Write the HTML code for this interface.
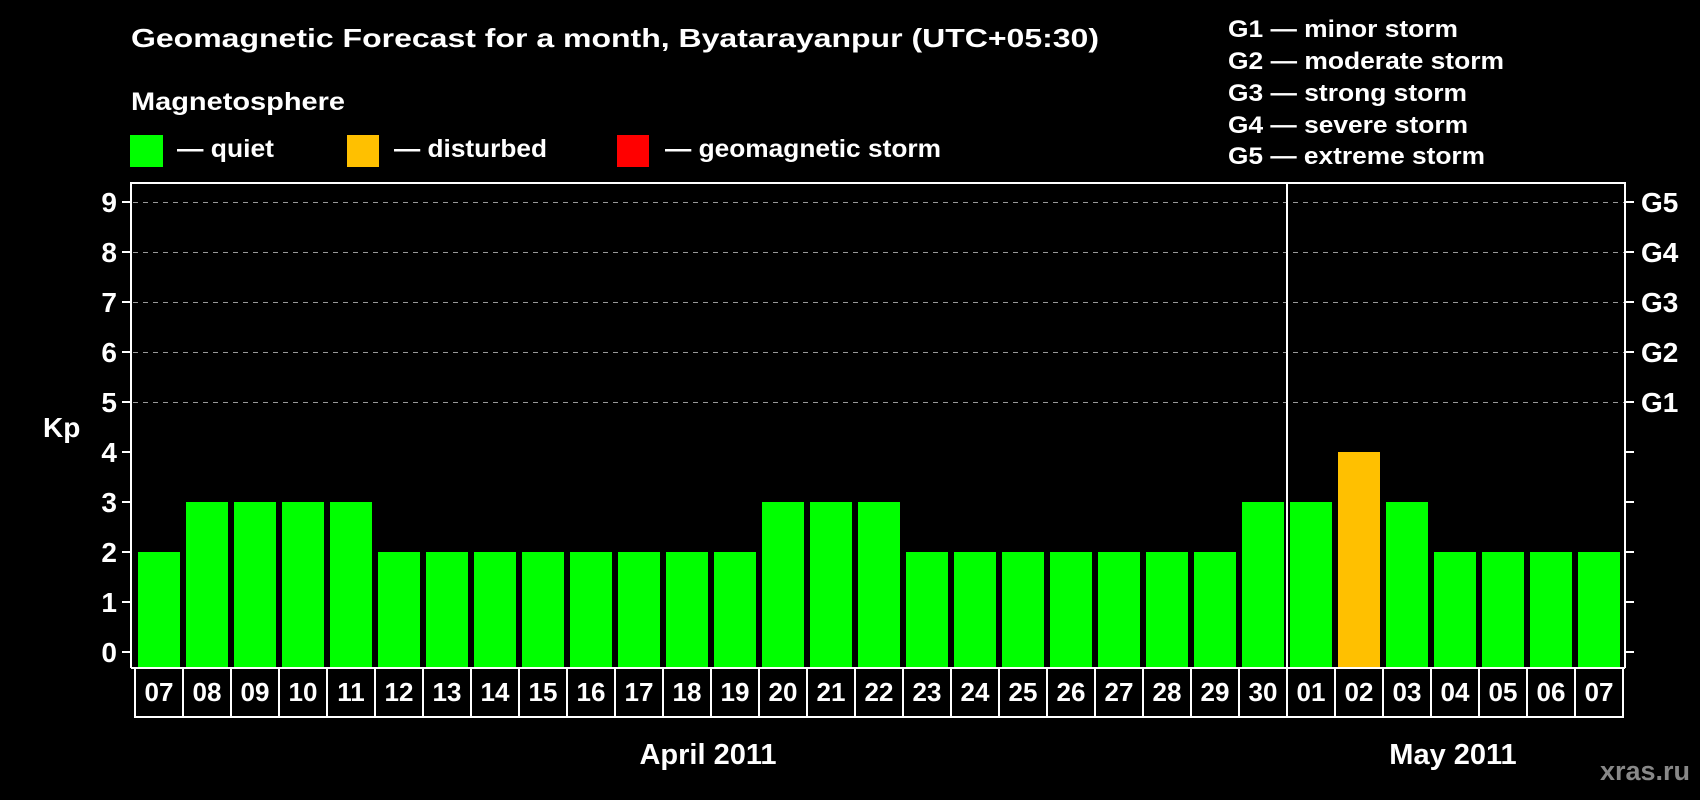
<!DOCTYPE html>
<html><head><meta charset="utf-8"><style>
html,body{margin:0;padding:0;background:#000;}
svg{display:block;font-family:"Liberation Sans",Arial,sans-serif;font-weight:bold;}
</style></head><body>
<svg width="1700" height="800" viewBox="0 0 1700 800" xmlns="http://www.w3.org/2000/svg">
<rect width="1700" height="800" fill="#000"/>
<g fill="#fff">
<text x="131" y="47" font-size="26" textLength="968" lengthAdjust="spacingAndGlyphs">Geomagnetic Forecast for a month, Byatarayanpur (UTC+05:30)</text>
<text x="131" y="110" font-size="25" textLength="214" lengthAdjust="spacingAndGlyphs">Magnetosphere</text>
<text x="177" y="157" font-size="25" textLength="97" lengthAdjust="spacingAndGlyphs">— quiet</text>
<text x="394" y="157" font-size="25" textLength="153" lengthAdjust="spacingAndGlyphs">— disturbed</text>
<text x="665" y="157" font-size="25" textLength="276" lengthAdjust="spacingAndGlyphs">— geomagnetic storm</text>
<g font-size="24">
<text x="1228" y="37" textLength="230" lengthAdjust="spacingAndGlyphs">G1 — minor storm</text>
<text x="1228" y="69" textLength="276" lengthAdjust="spacingAndGlyphs">G2 — moderate storm</text>
<text x="1228" y="101" textLength="239" lengthAdjust="spacingAndGlyphs">G3 — strong storm</text>
<text x="1228" y="133" textLength="240" lengthAdjust="spacingAndGlyphs">G4 — severe storm</text>
<text x="1228" y="164" textLength="257" lengthAdjust="spacingAndGlyphs">G5 — extreme storm</text>
</g>
</g>
<rect x="130" y="135" width="33" height="32" fill="#00ff00"/>
<rect x="347" y="135" width="32" height="32" fill="#ffc000"/>
<rect x="617" y="135" width="32" height="32" fill="#ff0000"/>

<g stroke="#999" stroke-width="1" stroke-dasharray="5,5">
<line x1="133" y1="202.5" x2="1624" y2="202.5"/>
<line x1="133" y1="252.5" x2="1624" y2="252.5"/>
<line x1="133" y1="302.5" x2="1624" y2="302.5"/>
<line x1="133" y1="352.5" x2="1624" y2="352.5"/>
<line x1="133" y1="402.5" x2="1624" y2="402.5"/>
</g>

<g fill="#00ff00">
<rect x="138" y="552" width="42" height="116"/>
<rect x="186" y="502" width="42" height="166"/>
<rect x="234" y="502" width="42" height="166"/>
<rect x="282" y="502" width="42" height="166"/>
<rect x="330" y="502" width="42" height="166"/>
<rect x="378" y="552" width="42" height="116"/>
<rect x="426" y="552" width="42" height="116"/>
<rect x="474" y="552" width="42" height="116"/>
<rect x="522" y="552" width="42" height="116"/>
<rect x="570" y="552" width="42" height="116"/>
<rect x="618" y="552" width="42" height="116"/>
<rect x="666" y="552" width="42" height="116"/>
<rect x="714" y="552" width="42" height="116"/>
<rect x="762" y="502" width="42" height="166"/>
<rect x="810" y="502" width="42" height="166"/>
<rect x="858" y="502" width="42" height="166"/>
<rect x="906" y="552" width="42" height="116"/>
<rect x="954" y="552" width="42" height="116"/>
<rect x="1002" y="552" width="42" height="116"/>
<rect x="1050" y="552" width="42" height="116"/>
<rect x="1098" y="552" width="42" height="116"/>
<rect x="1146" y="552" width="42" height="116"/>
<rect x="1194" y="552" width="42" height="116"/>
<rect x="1242" y="502" width="42" height="166"/>
<rect x="1290" y="502" width="42" height="166"/>
<rect x="1386" y="502" width="42" height="166"/>
<rect x="1434" y="552" width="42" height="116"/>
<rect x="1482" y="552" width="42" height="116"/>
<rect x="1530" y="552" width="42" height="116"/>
<rect x="1578" y="552" width="42" height="116"/>
</g>
<rect x="1338" y="452" width="42" height="216" fill="#ffc000"/>

<g stroke="#fff" stroke-width="2" fill="none">
<polyline points="131,668 131,183 1625,183 1625,668"/>
<line x1="131" y1="668" x2="1625" y2="668"/>
<line x1="1287" y1="183" x2="1287" y2="717"/>
<rect x="135" y="668" width="1488" height="49"/>
</g>
<g stroke="#fff" stroke-width="2">
<line x1="183" y1="668" x2="183" y2="717"/><line x1="231" y1="668" x2="231" y2="717"/><line x1="279" y1="668" x2="279" y2="717"/><line x1="327" y1="668" x2="327" y2="717"/><line x1="375" y1="668" x2="375" y2="717"/><line x1="423" y1="668" x2="423" y2="717"/><line x1="471" y1="668" x2="471" y2="717"/><line x1="519" y1="668" x2="519" y2="717"/><line x1="567" y1="668" x2="567" y2="717"/><line x1="615" y1="668" x2="615" y2="717"/><line x1="663" y1="668" x2="663" y2="717"/><line x1="711" y1="668" x2="711" y2="717"/><line x1="759" y1="668" x2="759" y2="717"/><line x1="807" y1="668" x2="807" y2="717"/><line x1="855" y1="668" x2="855" y2="717"/><line x1="903" y1="668" x2="903" y2="717"/><line x1="951" y1="668" x2="951" y2="717"/><line x1="999" y1="668" x2="999" y2="717"/><line x1="1047" y1="668" x2="1047" y2="717"/><line x1="1095" y1="668" x2="1095" y2="717"/><line x1="1143" y1="668" x2="1143" y2="717"/><line x1="1191" y1="668" x2="1191" y2="717"/><line x1="1239" y1="668" x2="1239" y2="717"/><line x1="1335" y1="668" x2="1335" y2="717"/><line x1="1383" y1="668" x2="1383" y2="717"/><line x1="1431" y1="668" x2="1431" y2="717"/><line x1="1479" y1="668" x2="1479" y2="717"/><line x1="1527" y1="668" x2="1527" y2="717"/><line x1="1575" y1="668" x2="1575" y2="717"/>
</g>

<g stroke="#fff" stroke-width="2">
<line x1="122" y1="202" x2="131" y2="202"/><line x1="122" y1="252" x2="131" y2="252"/><line x1="122" y1="302" x2="131" y2="302"/><line x1="122" y1="352" x2="131" y2="352"/><line x1="122" y1="402" x2="131" y2="402"/><line x1="122" y1="452" x2="131" y2="452"/><line x1="122" y1="502" x2="131" y2="502"/><line x1="122" y1="552" x2="131" y2="552"/><line x1="122" y1="602" x2="131" y2="602"/><line x1="122" y1="652" x2="131" y2="652"/>
<line x1="1625" y1="202" x2="1634" y2="202"/><line x1="1625" y1="252" x2="1634" y2="252"/><line x1="1625" y1="302" x2="1634" y2="302"/><line x1="1625" y1="352" x2="1634" y2="352"/><line x1="1625" y1="402" x2="1634" y2="402"/><line x1="1625" y1="452" x2="1634" y2="452"/><line x1="1625" y1="502" x2="1634" y2="502"/><line x1="1625" y1="552" x2="1634" y2="552"/><line x1="1625" y1="602" x2="1634" y2="602"/><line x1="1625" y1="652" x2="1634" y2="652"/>
</g>

<g fill="#fff" font-size="28" text-anchor="end">
<text x="117" y="212">9</text><text x="117" y="262">8</text><text x="117" y="312">7</text><text x="117" y="362">6</text><text x="117" y="412">5</text><text x="117" y="462">4</text><text x="117" y="512">3</text><text x="117" y="562">2</text><text x="117" y="612">1</text><text x="117" y="662">0</text>
</g>
<g fill="#fff" font-size="28">
<text x="43" y="437">Kp</text>
<text x="1641" y="212">G5</text><text x="1641" y="262">G4</text><text x="1641" y="312">G3</text><text x="1641" y="362">G2</text><text x="1641" y="412">G1</text>
</g>

<g fill="#fff" font-size="26" text-anchor="middle">
<text x="159" y="701">07</text><text x="207" y="701">08</text><text x="255" y="701">09</text><text x="303" y="701">10</text><text x="351" y="701">11</text><text x="399" y="701">12</text><text x="447" y="701">13</text><text x="495" y="701">14</text><text x="543" y="701">15</text><text x="591" y="701">16</text><text x="639" y="701">17</text><text x="687" y="701">18</text><text x="735" y="701">19</text><text x="783" y="701">20</text><text x="831" y="701">21</text><text x="879" y="701">22</text><text x="927" y="701">23</text><text x="975" y="701">24</text><text x="1023" y="701">25</text><text x="1071" y="701">26</text><text x="1119" y="701">27</text><text x="1167" y="701">28</text><text x="1215" y="701">29</text><text x="1263" y="701">30</text><text x="1311" y="701">01</text><text x="1359" y="701">02</text><text x="1407" y="701">03</text><text x="1455" y="701">04</text><text x="1503" y="701">05</text><text x="1551" y="701">06</text><text x="1599" y="701">07</text>
<text x="708" y="764" font-size="29">April 2011</text>
<text x="1453" y="764" font-size="29">May 2011</text>
</g>
<text x="1690" y="780" font-size="27" fill="#888" text-anchor="end">xras.ru</text>
</svg>
</body></html>
